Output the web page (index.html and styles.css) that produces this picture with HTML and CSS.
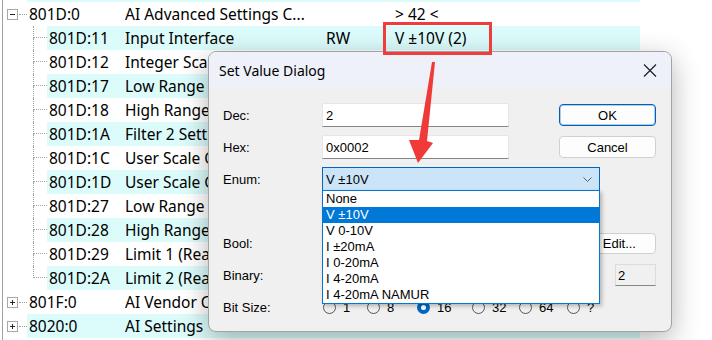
FILE: index.html
```html
<!DOCTYPE html>
<html lang="en">
<head>
  <meta charset="UTF-8">
  <title>Set Value Dialog</title>
  <link rel="stylesheet" href="styles.css">
</head>
<body>

  <div class="tree">
    <div class="row alt stub"><span class="indent root"></span><div class="band"></div></div>
    <div class="row">
      <span class="indent root"><i class="box"></i><i class="dash"></i></span>
      <div class="band"><span class="key">801D:0</span><span class="name">AI Advanced Settings C...</span><span class="flag"></span><span class="val">&gt; 42 &lt;</span></div>
    </div>
    <div class="row sub alt">
      <span class="indent"><i class="branch"></i></span>
      <div class="band"><span class="key">801D:11</span><span class="name">Input Interface</span><span class="flag">RW</span><span class="val">V ±10V (2)</span></div>
    </div>
    <div class="row sub under">
      <span class="indent"><i class="branch"></i></span>
      <div class="band"><span class="key">801D:12</span><span class="name">Integer Scaling</span></div>
    </div>
    <div class="row sub alt under">
      <span class="indent"><i class="branch"></i></span>
      <div class="band"><span class="key">801D:17</span><span class="name">Low Range Error</span></div>
    </div>
    <div class="row sub under">
      <span class="indent"><i class="branch"></i></span>
      <div class="band"><span class="key">801D:18</span><span class="name">High Range Error</span></div>
    </div>
    <div class="row sub alt under">
      <span class="indent"><i class="branch"></i></span>
      <div class="band"><span class="key">801D:1A</span><span class="name">Filter 2 Settings</span></div>
    </div>
    <div class="row sub under">
      <span class="indent"><i class="branch"></i></span>
      <div class="band"><span class="key">801D:1C</span><span class="name">User Scale Offset</span></div>
    </div>
    <div class="row sub alt under">
      <span class="indent"><i class="branch"></i></span>
      <div class="band"><span class="key">801D:1D</span><span class="name">User Scale Gain</span></div>
    </div>
    <div class="row sub under">
      <span class="indent"><i class="branch"></i></span>
      <div class="band"><span class="key">801D:27</span><span class="name">Low Range Error</span></div>
    </div>
    <div class="row sub alt under">
      <span class="indent"><i class="branch"></i></span>
      <div class="band"><span class="key">801D:28</span><span class="name">High Range Error</span></div>
    </div>
    <div class="row sub under">
      <span class="indent"><i class="branch"></i></span>
      <div class="band"><span class="key">801D:29</span><span class="name">Limit 1 (Real)</span></div>
    </div>
    <div class="row sub alt under">
      <span class="indent"><i class="branch last"></i></span>
      <div class="band"><span class="key">801D:2A</span><span class="name">Limit 2 (Real)</span></div>
    </div>
    <div class="row under">
      <span class="indent root"><i class="box plus"></i><i class="dash"></i></span>
      <div class="band"><span class="key">801F:0</span><span class="name">AI Vendor Calibration</span></div>
    </div>
    <div class="row alt under">
      <span class="indent root"><i class="box plus"></i><i class="dash"></i></span>
      <div class="band"><span class="key">8020:0</span><span class="name">AI Settings</span></div>
    </div>
  </div>

  <div class="dialog">
    <div class="titlebar">
      <span>Set Value Dialog</span>
      <svg class="close" width="14" height="13" viewBox="0 0 14 13">
        <path d="M1 0.5 L13 12.5 M13 0.5 L1 12.5" stroke="#1a1a1a" stroke-width="1.1" fill="none"/>
      </svg>
    </div>

    <div class="form">
      <div class="label">Dec:</div>
      <div class="field">
        <div class="text">2</div>
        <div class="btn ok">OK</div>
      </div>

      <div class="label">Hex:</div>
      <div class="field">
        <div class="text">0x0002</div>
        <div class="btn">Cancel</div>
      </div>

      <div class="label">Enum:</div>
      <div class="field">
        <div class="combo">
          <span>V ±10V</span>
          <svg width="9" height="5" viewBox="0 0 9 5">
            <path d="M0.5 0.5 L4.5 4.5 L8.5 0.5" stroke="#5f5f5f" fill="none"/>
          </svg>
          <div class="list">
            <div>None</div>
            <div class="sel">V ±10V</div>
            <div>V 0-10V</div>
            <div>I ±20mA</div>
            <div>I 0-20mA</div>
            <div>I 4-20mA</div>
            <div>I 4-20mA NAMUR</div>
          </div>
        </div>
      </div>

      <div class="label"></div>
      <div class="field"></div>

      <div class="label">Bool:</div>
      <div class="field">
        <div class="btn wide">Edit...</div>
      </div>

      <div class="label">Binary:</div>
      <div class="field">
        <div class="text small">2</div>
      </div>

      <div class="label">Bit Size:</div>
      <div class="field radios">
        <span class="radio"><i class="dot"></i>1</span>
        <span class="radio"><i class="dot"></i>8</span>
        <span class="radio on"><i class="dot"></i>16</span>
        <span class="radio"><i class="dot"></i>32</span>
        <span class="radio"><i class="dot"></i>64</span>
        <span class="radio"><i class="dot"></i>?</span>
      </div>
    </div>
  </div>

  <!-- annotation drawn over the screenshot -->
  <svg class="marks" width="712" height="340" viewBox="0 0 712 340">
    <rect x="384.5" y="23.5" width="106" height="30" fill="none" stroke="#ef3d3d" stroke-width="3"/>
    <polygon points="432,62 435,62 427,141 433,143 418,163 409,140 419,140" fill="#f03a3a"/>
  </svg>

</body>
</html>
```

FILE: styles.css
```css
body {
  margin: 0;
  width: 712px;
  height: 340px;
  overflow: hidden;
  position: relative;
  background: #fff;
  font-family: "Noto Sans", sans-serif;
}

/* tree list */

.tree {
  margin-left: 2px;
  border-left: 1px solid #a0a0a0;
  width: 637px;
  height: 340px;
  font-size: 15.5px;
  color: #000;
}

.row {
  display: flex;
  height: 24px;
  line-height: 24px;
}

.row.stub {
  height: 2px;
}

.indent {
  flex: none;
  display: flex;
  width: 44px;
  padding-left: 30px;
  box-sizing: border-box;
}

.indent.root {
  width: 24px;
  padding-left: 4px;
  align-items: center;
}

.box {
  width: 11px;
  height: 11px;
  box-sizing: border-box;
  border: 1px solid #a8a8a8;
  background: linear-gradient(#222, #222) center / 5px 1px no-repeat;
}

.box.plus {
  background:
    linear-gradient(#222, #222) center / 5px 1px no-repeat,
    linear-gradient(#222, #222) center / 1px 5px no-repeat;
}

.dash {
  flex: 1;
  margin-left: 1px;
  border-top: 1px dotted #a0a0a0;
}

.branch {
  flex: 1;
  display: flex;
  flex-direction: column;
}

.branch::before {
  content: "";
  height: 12px;
  box-sizing: border-box;
  border-left: 1px dotted #a0a0a0;
  border-bottom: 1px dotted #a0a0a0;
}

.branch::after {
  content: "";
  flex: 1;
  border-left: 1px dotted #a0a0a0;
}

.branch.last::after {
  border-left: none;
}

.band {
  flex: 1;
  display: flex;
  white-space: nowrap;
  overflow: hidden;
}

.alt .band {
  background: #dcfbfb;
}

.key {
  flex: none;
  width: 98px;
  padding-left: 2px;
  box-sizing: border-box;
}

.sub .key {
  width: 78px;
}

.name {
  flex: none;
  width: 201px;
  overflow: hidden;
}

/* rows behind the dialog: names end at its left edge */
.under .name {
  width: 83px;
}

.flag {
  flex: none;
  width: 69px;
}

/* dialog */

.dialog {
  position: absolute;
  left: 208px;
  top: 51px;
  width: 464px;
  height: 281px;
  box-sizing: border-box;
  border: 1px solid #a3a3a3;
  border-radius: 8px;
  background: #f0f0f0;
  box-shadow: 0 8px 28px rgba(0, 0, 0, 0.3);
  overflow: hidden;
  font-family: "Liberation Sans", Arial, sans-serif;
  font-size: 13px;
  color: #000;
}

.titlebar {
  height: 36px;
  display: flex;
  align-items: center;
  justify-content: space-between;
  padding: 0 14px 0 10px;
  background: #eef1f9;
  font-family: "Noto Sans", sans-serif;
  font-size: 14px;
}

.form {
  display: grid;
  grid-template-columns: 99px 1fr;
  grid-auto-rows: 24px;
  row-gap: 8px;
  align-items: center;
  padding: 15px 15px 0 14px;
}

.field {
  display: flex;
  align-items: center;
}

.text {
  width: 187px;
  height: 24px;
  box-sizing: border-box;
  display: flex;
  align-items: center;
  padding-left: 3px;
  background: #fff;
  border: 1px solid #e6e6e6;
  border-bottom-color: #868686;
}

.text.small {
  width: 41px;
  height: 22px;
  margin-left: auto;
  padding-left: 2px;
  background: #f0f0f0;
  border-color: #dcdcdc;
  border-bottom-color: #868686;
}

.btn {
  width: 97px;
  height: 22px;
  box-sizing: border-box;
  margin-left: auto;
  display: flex;
  align-items: center;
  justify-content: center;
  background: #fdfdfd;
  border: 1px solid #d0d0d0;
  border-radius: 4px;
}

.btn.ok {
  border-color: #005fb8;
  box-shadow: inset 0 0 0 1px rgba(0, 95, 184, 0.3);
}

.btn.wide {
  width: 66px;
  height: 21px;
  justify-content: flex-end;
  padding-right: 19px;
}

.combo {
  position: relative;
  width: 278px;
  height: 24px;
  box-sizing: border-box;
  display: flex;
  align-items: center;
  justify-content: space-between;
  padding: 0 7px 0 3px;
  background: #cce4f7;
  border: 1px solid #0067c0;
}

.list {
  position: absolute;
  left: -1px;
  top: 100%;
  width: 278px;
  box-sizing: border-box;
  border: 1px solid #0078d4;
  background: #fff;
  box-shadow: 2px 2px 4px rgba(0, 0, 0, 0.25);
  z-index: 2;
}

.list div {
  height: 16px;
  line-height: 16px;
  padding-left: 3px;
  white-space: nowrap;
}

.list .sel {
  background: #0078d7;
  color: #fff;
}

.radios {
  padding-left: 1px;
}

.radio {
  display: flex;
  align-items: center;
  gap: 7px;
  flex: none;
}

.radio:nth-child(1) { width: 44px; }
.radio:nth-child(2) { width: 50px; }
.radio:nth-child(3) { width: 55px; }
.radio:nth-child(4) { width: 47px; }
.radio:nth-child(5) { width: 48px; }

.dot {
  width: 13px;
  height: 13px;
  box-sizing: border-box;
  border: 1px solid #555;
  border-radius: 50%;
}

.radio.on .dot {
  border: 4px solid #0067c0;
  background: #fff;
}

.marks {
  position: absolute;
  left: 0;
  top: 0;
  pointer-events: none;
}
```
